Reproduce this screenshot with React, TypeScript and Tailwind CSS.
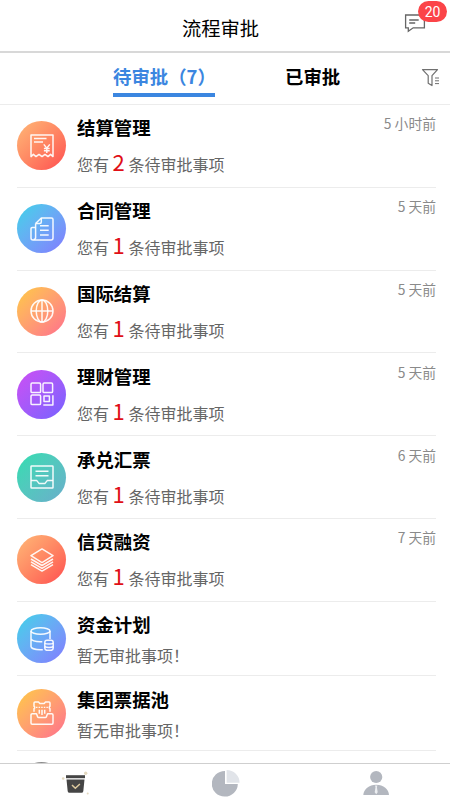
import type { ReactNode } from "react";

type Item = {
   name: string;
   count: number;
   time?: string;
   gradient: string;
   icon: ReactNode;
};

const ITEMS: Item[] = [
   {
      name: "结算管理",
      count: 2,
      time: "5 小时前",
      gradient: "from-[#ffb877] to-[#ff4a50]",
      icon: (
         <>
            <path d="M1 22.6V1h22v21.6l-2.4-2.2-2.6 2.2-3-2.2-3 2.2-3-2.2-3 2.2-2.6-2.2z" />
            <path d="M4 4.6h12.5M4 7.9h9" />
            <path d="M13.8 10.4l3 3.7 3-3.7M16.8 14.1v4.9M13.9 14.4h5.8M13.9 16.7h5.8" />
         </>
      ),
   },
   {
      name: "合同管理",
      count: 1,
      time: "5 天前",
      gradient: "from-[#35d3e8] to-[#8179ff]",
      icon: (
         <>
            <path d="M5.6 6.5L11.3 1H21.5a1.5 1.5 0 0 1 1.5 1.5V21a2 2 0 0 1-2 2H3a2 2 0 0 1-2-2v-9.3a1.3 1.3 0 0 1 1.3-1.3h3.3" />
            <path d="M5.6 6.5v14a2 2 0 0 1-2 2M5.6 6.5h4.2a1.5 1.5 0 0 0 1.5-1.5V1M10 8.7h8.7M10 13.3h8.7M10 18h8.7" />
         </>
      ),
   },
   {
      name: "国际结算",
      count: 1,
      time: "5 天前",
      gradient: "from-[#fdca3e] to-[#ff6d8b]",
      icon: (
         <>
            <circle cx="12" cy="12" r="11" />
            <ellipse cx="12" cy="12" rx="5.8" ry="11" />
            <path d="M1 12h22M12 1v22" />
         </>
      ),
   },
   {
      name: "理财管理",
      count: 1,
      time: "5 天前",
      gradient: "from-[#cd4df4] to-[#7461ff]",
      icon: (
         <>
            <rect x="1" y="1" width="9.6" height="9.6" rx="1.2" />
            <rect x="13" y="1" width="9.6" height="9.6" rx="1.2" />
            <rect x="1" y="13" width="9.6" height="9.6" rx="1.2" />
            <rect x="14" y="14" width="5.4" height="5.4" />
            <path d="M22.9 13.2v9.7h-9.6" />
         </>
      ),
   },
   {
      name: "承兑汇票",
      count: 1,
      time: "6 天前",
      gradient: "from-[#2ddeb0] to-[#69adcb]",
      icon: (
         <>
            <rect x="1" y="1" width="22" height="22" rx="0.6" />
            <path d="M5.5 6.2h13M5.5 10.7h13M1 15.6h5.8l2.4 3h5.6l2.4-3H23" />
         </>
      ),
   },
   {
      name: "信贷融资",
      count: 1,
      time: "7 天前",
      gradient: "from-[#ffb877] to-[#ff4a50]",
      icon: (
         <>
            <path d="M12 .9L23 7.7 12 14.6 1 7.7z" />
            <path d="M1 11l11 6.5L23 11M1 13.8l11 6.5 11-6.5M1 16.6l11 6.5 11-6.5" />
         </>
      ),
   },
   {
      name: "资金计划",
      count: 0,
      gradient: "from-[#35d3e8] to-[#8179ff]",
      icon: (
         <>
            <ellipse cx="10.5" cy="4" rx="9.5" ry="3.2" />
            <path d="M1 4v15.4c0 1.9 4.2 3.3 9.5 3.3h2.3M20 4v8M1 11.8c.6 1.7 4 2.9 9.5 2.9h1.8" />
            <rect x="14.8" y="13.3" width="8.4" height="10" rx="2.2" />
            <path d="M14.8 16.4c2 .9 6.4.9 8.4 0M14.8 19.8c2 .9 6.4.9 8.4 0" />
         </>
      ),
   },
   {
      name: "集团票据池",
      count: 0,
      gradient: "from-[#fdca3e] to-[#ff6d8b]",
      icon: (
         <>
            <path d="M4 10.8V7.6c1-.4 1-2 0-2.400V2a1 1 0 0 1 1-1h3.500l1.300 1.400h4.400L15.500 1H19a1 1 0 0 1 1 1v3.200c-1 .4-1 2 0 2.400v3.200" />
            <path d="M6 6.400h12" strokeDasharray="1.5 1.1" strokeWidth="1.1" />
            <path d="M9.300 8.700v4M12 8.700v5.300M14.700 8.700v4" />
            <path d="M1 14a1.200 1.200 0 0 1 1.200-1.200h4.300l1.200 3.200a1 1 0 0 0 .9.600h6.800a1 1 0 0 0 .9-.6l1.200-3.200h4.300A1.200 1.200 0 0 1 23 14v8a1.200 1.200 0 0 1-1.200 1.200H2.200A1.200 1.200 0 0 1 1 22z" />
         </>
      ),
   },
];

function ItemRow({ item }: { item: Item }) {
   const pending = item.count > 0;

   return (
      <li
         className={
            "flex shrink-0 items-center border-b border-[#ececec] " + (pending ? "h-[82.8px]" : "h-[74.5px]")
         }
      >
         <span
            className={
               "grid h-[49px] w-[49px] shrink-0 place-items-center rounded-full bg-linear-to-br " + item.gradient
            }
         >
            <svg
               viewBox="0 0 24 24"
               className="h-6 w-6"
               fill="none"
               stroke="#fff"
               strokeOpacity="0.92"
               strokeWidth="1.5"
               strokeLinejoin="round"
            >
               {item.icon}
            </svg>
         </span>
         <div className="ml-[11px] flex flex-1 flex-col self-stretch pt-[9.4px]">
            <div className="flex justify-between">
               <h2 className="text-[18.4px] leading-[27px] font-bold text-black">{item.name}</h2>
               <span className="text-[13.8px] leading-[19px] text-[#8a8a8a]">{item.time}</span>
            </div>
            {pending ? (
               <p className="text-base leading-[46px] text-[#666]">
                  您有 <span className="text-[22px] leading-none text-[#e00f17]">{item.count}</span> 条待审批事项
               </p>
            ) : (
               <p className="text-base leading-[35px] text-[#666]">暂无审批事项！</p>
            )}
         </div>
      </li>
   );
}

function Header() {
   return (
      <header className="relative flex h-[53px] shrink-0 items-center justify-center border-b-2 border-[#d8d8d8] pt-1 pr-[9px]">
         <h1 className="text-[19.3px] leading-7 text-black">流程审批</h1>
         <svg
            viewBox="0 0 22 20"
            className="absolute top-[13px] left-[404px] h-5 w-[22px]"
            fill="none"
            stroke="#666"
            strokeWidth="1.3"
         >
            <path d="M1.600 2h18.800v12.800H9.200L4.300 18.200v-3.400H1.600z" />
            <path d="M5.200 7h9.500M5.200 10h6" />
         </svg>
         <span className="absolute top-[1px] left-[418px] grid h-[21px] w-[29px] place-items-center rounded-full bg-[#fb4448] font-[Roboto] text-[14px] leading-none text-white">
            20
         </span>
      </header>
   );
}

function Tabs() {
   return (
      <div className="flex h-[52px] shrink-0 border-b border-[#ececec] pt-2">
         <button className="ml-[113px] flex h-9 w-[102px] items-start border-b-[4px] border-[#3b86e0] text-left text-[18.4px] leading-[31px] font-bold whitespace-nowrap text-[#3b86e0]">
            待审批（7）
         </button>
         <button className="ml-[70px] flex h-9 items-start text-[18.4px] leading-[31px] font-bold text-black">
            已审批
         </button>
         <svg
            viewBox="0 0 20 20"
            className="mt-[6px] ml-[81px] h-5 w-5"
            fill="none"
            stroke="#707070"
            strokeWidth="1.2"
            strokeLinejoin="round"
         >
            <path d="M1.500 2.600h15l-5.500 6v10l-3.800-2.400V8.600z" />
            <path d="M14 11h4M14 13.800h4M14 16.600h4" strokeWidth="1" />
         </svg>
      </div>
   );
}

function BottomNav() {
   return (
      <nav className="grid h-[37px] shrink-0 grid-cols-3 justify-items-center border-t border-[#cfcfcf] bg-white">
         <svg viewBox="0 0 30 28" className="mt-[5px] h-7 w-[30px]">
            <path d="M6 6.200h19v3H6z" fill="#454545" />
            <path d="M6.500 10.500h18l-1.200 11.800a1.800 1.800 0 0 1-1.800 1.500H9.500a1.800 1.800 0 0 1-1.800-1.500z" fill="#454545" />
            <path d="M12 16l3.300 3.300 4.600-4.300" fill="none" stroke="#dcc99e" strokeWidth="1.5" />
            <g fill="#e3d8bf">
               <circle cx="25.700" cy="4.200" r="1.700" />
               <circle cx="3.200" cy="9.500" r="1.300" />
               <circle cx="27.700" cy="24.500" r="1" />
            </g>
         </svg>
         <svg viewBox="0 0 28 28" className="mt-[5px] ml-px h-7 w-7">
            <path d="M13 2a13 12.800 0 1 0 12.800 13H13z" fill="#b3b7bf" />
            <path d="M14.600 1v12.700H27.600A13 12.700 0 0 0 14.600 1z" fill="#e1e4e9" />
         </svg>
         <svg viewBox="0 0 28 26" className="mt-[6px] h-[26px] w-7">
            <circle cx="15.200" cy="7" r="6.100" fill="#b3b7bf" />
            <path d="M2.300 25c.3-6 5.700-10.300 12.900-10.300S27.800 19 28 25z" fill="#b3b7bf" />
            <path d="M14 15.500h2.400l-.5 1.700.8 5-1.500 2-1.500-2 .8-5z" fill="#eceef1" />
         </svg>
      </nav>
   );
}

export default function App() {
   return (
      <div className="flex h-[800px] w-[450px] flex-col overflow-hidden bg-white font-['Noto_Sans_CJK_SC',sans-serif]">
         <Header />
         <Tabs />
         <ul className="flex min-h-0 flex-1 flex-col overflow-hidden pr-3.5 pl-[17px]">
            {ITEMS.map((item) => (
               <ItemRow key={item.name} item={item} />
            ))}
            {/* next entry, scrolled under the nav */}
            <li className="shrink-0 pt-[11px]">
               <span className="block h-[49px] w-[49px] rounded-full bg-[#8b8b8b]" />
            </li>
         </ul>
         <BottomNav />
      </div>
   );
}
